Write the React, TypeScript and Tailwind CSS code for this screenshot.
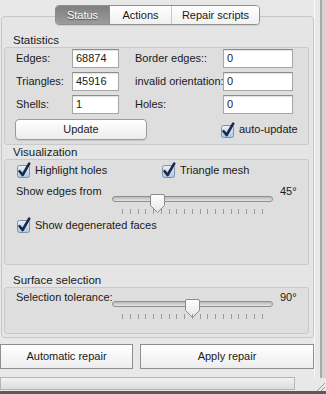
import React from 'react'

function Check({ label, className = '' }: { label: string; className?: string }) {
  return (
    <label className={`flex items-center gap-[3px] ${className}`}>
      <svg width="16" height="16" viewBox="0 0 16 16" className="shrink-0">
        <defs>
          <linearGradient id="cbg" x1="0" y1="0" x2="0" y2="1">
            <stop offset="0" stopColor="#eaf2fb" />
            <stop offset="1" stopColor="#a8c6e6" />
          </linearGradient>
        </defs>
        <rect x="1.5" y="3.5" width="12" height="12" rx="2" fill="url(#cbg)" stroke="#7f8fa6" />
        <path d="M3.6 9.2 L6.6 13 L13.2 1.6" fill="none" stroke="#1c2848" strokeWidth="2.6" strokeLinecap="round" strokeLinejoin="round" />
      </svg>
      <span>{label}</span>
    </label>
  )
}

function Field({ value }: { value: string }) {
  return (
    <div className="h-[19px] bg-white border border-[#a6a6a6] border-t-[#8c8c8c] px-[3px] leading-[17px] shadow-[inset_0_1px_1px_rgba(0,0,0,0.12)]">
      {value}
    </div>
  )
}

function Slider({ pos }: { pos: number }) {
  const ticks = Array.from({ length: 19 })
  return (
    <div className="relative w-[161px] h-[22px]">
      <div className="absolute left-0 right-0 top-[3px] h-[6px] rounded-full border border-[#8f8f8f] bg-gradient-to-b from-[#b9b9b9] to-[#e4e4e4]" />
      <div className="absolute top-[1px]" style={{ left: pos - 8 }}>
        <svg width="17" height="20" viewBox="0 0 17 20">
          <defs>
            <linearGradient id="thumb" x1="0" y1="0" x2="0" y2="1">
              <stop offset="0" stopColor="#ffffff" />
              <stop offset="1" stopColor="#e6e6e6" />
            </linearGradient>
          </defs>
          <path d="M1.5 2 Q1.5 0.5 3 0.5 H14 Q15.5 0.5 15.5 2 V11.5 L8.5 18.5 L1.5 11.5 Z" fill="url(#thumb)" stroke="#8a8a8a" />
        </svg>
      </div>
      <div className="absolute left-[10px] right-[10px] top-[16px] flex justify-between">
        {ticks.map((_, i) => (
          <div key={i} className="w-px h-[5px] bg-[#9a9a9a]" />
        ))}
      </div>
    </div>
  )
}

function Group({ title, children, className = '', outer = '' }: { title: string; children: React.ReactNode; className?: string; outer?: string }) {
  return (
    <div className={outer}>
      <div className="pl-[9px] h-[14px] leading-[14px] text-[11.5px]">{title}</div>
      <div className={`border border-[#c9c9c9] bg-[#dedede] rounded-[3px] ${className}`}>{children}</div>
    </div>
  )
}

export default function App() {
  return (
    <div className="relative w-[326px] h-[394px] bg-[#e8e8e8] overflow-hidden flex text-[11px] text-[#1a1a1a]" style={{ fontFamily: '"Liberation Sans", Arial, sans-serif' }}>
      <div className="w-[314px] shrink-0 flex flex-col">
        {/* Tabs */}
        <div className="pt-[5px] pl-[55px] relative z-10">
          <div className="flex h-[20px] w-[205px] rounded-[4px] border border-[#8e8e8e] overflow-hidden shadow-[0_1px_1px_rgba(0,0,0,0.1)]">
            <div className="w-[53px] flex items-center justify-center bg-gradient-to-b from-[#7f7f7f] to-[#9c9c9c] text-white [text-shadow:0_1px_1px_rgba(0,0,0,0.5)]">Status</div>
            <div className="w-[62px] flex items-center justify-center bg-gradient-to-b from-white to-[#f0f0f0] border-l border-[#8e8e8e]">Actions</div>
            <div className="flex-1 flex items-center justify-center bg-gradient-to-b from-white to-[#f0f0f0] border-l border-[#c8c8c8]">Repair scripts</div>
          </div>
        </div>

        {/* Pane */}
        <div className="-mt-[9px] ml-[1px] w-[313px] h-[322px] border border-[#c6c6c6] rounded-[4px] bg-[#e5e5e5] pt-[16px] pl-[2px] pr-[4px] flex flex-col">
          <Group title="Statistics" className="h-[98px] pl-[11px] pt-[1px]">
            <div className="grid grid-cols-[56px_47px_16px_88px_70px] gap-y-[4px] items-center">
              <span>Edges:</span>
              <Field value="68874" />
              <span />
              <span>Border edges::</span>
              <Field value="0" />
              <span>Triangles:</span>
              <Field value="45916" />
              <span />
              <span className="whitespace-nowrap">invalid orientation:</span>
              <Field value="0" />
              <span>Shells:</span>
              <Field value="1" />
              <span />
              <span>Holes:</span>
              <Field value="0" />
            </div>
            <div className="flex items-center mt-[5px]">
              <button className="w-[132px] h-[21px] -ml-[1px] rounded-[4px] border border-[#9b9b9b] bg-gradient-to-b from-white to-[#ececec] shadow-[0_1px_1px_rgba(0,0,0,0.1)]">Update</button>
              <Check label="auto-update" className="ml-[73px]" />
            </div>
          </Group>

          <Group title="Visualization" className="h-[106px] pl-[11px] pt-[1px]">
            <div className="flex items-center h-[18px]">
              <Check label="Highlight holes" className="w-[145px]" />
              <Check label="Triangle mesh" />
            </div>
            <div className="flex items-start mt-[6px] h-[32px]">
              <span className="w-[96px] leading-[13px] whitespace-nowrap">Show edges from</span>
              <div className="mt-[8px]">
                <Slider pos={45} />
              </div>
              <span className="ml-[7px] leading-[13px]">45°</span>
            </div>
            <Check label="Show degenerated faces" />
          </Group>

          <Group title="Surface selection" outer="mt-[8px]" className="h-[47px] pl-[11px] pt-[3px]">
            <div className="flex items-start h-[24px]">
              <span className="w-[96px] leading-[13px] whitespace-nowrap">Selection tolerance:</span>
              <div className="mt-[7px]">
                <Slider pos={80} />
              </div>
              <span className="ml-[7px] leading-[13px]">90°</span>
            </div>
          </Group>
        </div>

        {/* Bottom buttons */}
        <div className="flex gap-[7px] mt-[6px] h-[25px]">
          <button className="w-[133px] border border-[#8f8f8f] bg-gradient-to-b from-white to-[#ededed]">Automatic repair</button>
          <button className="flex-1 border border-[#8f8f8f] bg-gradient-to-b from-white to-[#ededed]">Apply repair</button>
        </div>

        {/* Status bar */}
        <div className="mt-[8px] h-[13px] w-[295px] border border-[#b5b5b5] bg-gradient-to-b from-[#f2f2f2] to-[#dcdcdc]" />
      </div>

      {/* Right edge */}
      <div className="flex-1 flex flex-col">
        <div className="flex-1 flex">
          <div className="w-[6px] border-l border-white/70" />
          <div className="w-[2px] bg-[#a9a9a9]" />
          <div className="flex-1 bg-[#d4d4d4]" />
        </div>
        <svg width="12" height="16" viewBox="0 0 12 16" className="bg-[#e8e8e8]">
          <path d="M11 5 L1 15 M11 9 L5 15 M11 13 L9 15" stroke="#9a9a9a" strokeWidth="1" />
        </svg>
      </div>
      <div className="absolute left-0 bottom-0 w-[326px] h-[3px] bg-[#5a5a5a]" />
    </div>
  )
}
